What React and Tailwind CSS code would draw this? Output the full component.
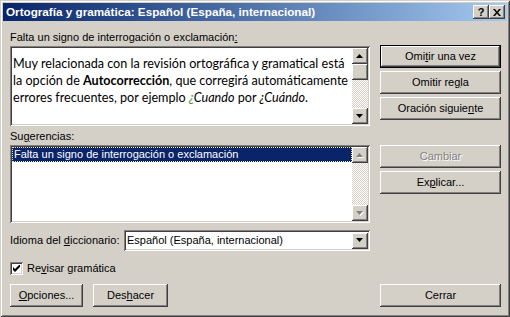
import React from "react"

const raised =
  "shadow-[inset_-1px_-1px_#404040,inset_1px_1px_#ffffff,inset_-2px_-2px_#808080,inset_2px_2px_#d4d0c8]"
const sunken =
  "shadow-[inset_1px_1px_#808080,inset_-1px_-1px_#ffffff,inset_2px_2px_#404040,inset_-2px_-2px_#d4d0c8]"
const checker =
  "bg-[image:repeating-conic-gradient(#d4d0c8_0_25%,#ffffff_0_50%)] bg-[length:2px_2px]"

function Button({ children, className = "", disabled, isDefault }) {
  if (isDefault) {
    return (
      <div className={`border border-black ${className}`}>
        <div className={`h-full flex items-center justify-center bg-[#d4d0c8] ${raised}`}>
          {children}
        </div>
      </div>
    )
  }
  return (
    <div
      className={`flex items-center justify-center bg-[#d4d0c8] ${raised} ${
        disabled ? "text-[#808080] [text-shadow:1px_1px_#ffffff]" : "text-black"
      } ${className}`}
    >
      {children}
    </div>
  )
}

function Arrow({ down, disabled }) {
  const d = down ? "M0 0h7L3.5 4z" : "M3.5 0L7 4H0z"
  return (
    <svg width="8" height="5" viewBox="0 0 8 5">
      {disabled && <path d={d} fill="#ffffff" transform="translate(1 1)" />}
      <path d={d} fill={disabled ? "#808080" : "#000000"} />
    </svg>
  )
}

function ScrollButton({ down, disabled }) {
  return (
    <div className={`w-[16px] h-[16px] shrink-0 flex items-center justify-center bg-[#d4d0c8] ${raised}`}>
      <Arrow down={down} disabled={disabled} />
    </div>
  )
}

export default function App() {
  return (
    <div
      className={`w-[510px] h-[317px] bg-[#d4d0c8] p-[3px] flex flex-col text-[11px] text-black font-['Liberation_Sans',Arial,sans-serif] shadow-[inset_1px_1px_#d4d0c8,inset_-1px_-1px_#404040,inset_2px_2px_#ffffff,inset_-2px_-2px_#808080]`}
    >
      {/* title bar */}
      <div className="h-[18px] shrink-0 flex items-center bg-linear-to-r from-[#0a246a] to-[#a6caf0] pl-[3px] pr-[2px]">
        <span className="text-white font-bold text-[11.7px] whitespace-nowrap">
          Ortografía y gramática: Español (España, internacional)
        </span>
        <div className="ml-auto flex">
          <div className={`w-[16px] h-[14px] flex items-center justify-center bg-[#d4d0c8] ${raised} text-[11px] font-bold leading-none`}>
            ?
          </div>
          <div className={`w-[16px] h-[14px] flex items-center justify-center bg-[#d4d0c8] ${raised}`}>
            <svg width="8" height="7" viewBox="0 0 8 7">
              <path d="M0 0h2l2 2.5L6 0h2L5 3.5 8 7H6L4 4.5 2 7H0l3-3.5z" fill="#000" />
            </svg>
          </div>
        </div>
      </div>

      <div className="flex flex-col pl-[7px] pr-[6px]">
        <div className="flex mt-[10px]">
          {/* left column */}
          <div className="w-[360px] flex flex-col">
            <div className="h-[13px] leading-[13px] whitespace-nowrap">
              Falta un signo de interrogación o exclamación<u>:</u>
            </div>
            <div className={`mt-[2px] h-[80px] bg-white p-[2px] flex ${sunken}`}>
              <div className="flex-1 pl-[1px] pt-[7px] text-[12.6px] leading-[17px] font-['Lato',sans-serif] whitespace-nowrap">
                <div>Muy relacionada con la revisión ortográfica y gramatical está</div>
                <div>
                  la opción de <b>Autocorrección</b>, que corregirá automáticamente
                </div>
                <div>
                  errores frecuentes, por ejemplo{" "}
                  <i>
                    <span className="text-[#3f9b2f]">¿</span>Cuando
                  </i>
                  {"  "}por <i>¿Cuándo</i>.
                </div>
              </div>
              <div className="w-[16px] flex flex-col">
                <ScrollButton />
                <div className={`w-[16px] h-[16px] bg-[#d4d0c8] ${raised}`} />
                <div className={`flex-1 ${checker}`} />
                <ScrollButton down />
              </div>
            </div>

            <div className="mt-[4px] h-[13px] leading-[13px]">
              Su<u>g</u>erencias:
            </div>
            <div className={`mt-[2px] h-[78px] bg-white p-[2px] flex ${sunken}`}>
              <div className="flex-1">
                <div className="h-[15px] bg-[#0a246a] text-white border border-dotted border-[#f3e7a8] leading-[13px] pl-[1px] whitespace-nowrap">
                  Falta un signo de interrogación o exclamación
                </div>
              </div>
              <div className={`w-[16px] flex flex-col ${checker}`}>
                <ScrollButton disabled />
                <div className="flex-1" />
                <ScrollButton down disabled />
              </div>
            </div>

            <div className="mt-[7px] h-[21px] flex items-center">
              <div className="w-[114px] whitespace-nowrap">
                Idioma del <u>d</u>iccionario:
              </div>
              <div className={`w-[246px] h-[21px] bg-white p-[2px] flex items-center ${sunken}`}>
                <div className="flex-1 pl-[1px] whitespace-nowrap">Español (España, internacional)</div>
                <ScrollButton down />
              </div>
            </div>
          </div>

          {/* right column */}
          <div className="w-[121px] ml-[10px] flex flex-col">
            <Button isDefault className="mt-[14px] h-[23px]">
              Omi<u>t</u>ir una vez
            </Button>
            <Button className="mt-[3px] h-[23px]">
              Omitir re<u>g</u>la
            </Button>
            <Button className="mt-[3px] h-[23px]">
              Oración siguie<u>n</u>te
            </Button>
            <Button disabled className="mt-[25px] h-[23px]">
              Cambiar
            </Button>
            <Button className="mt-[3px] h-[23px]">
              Ex<u>p</u>licar...
            </Button>
          </div>
        </div>

        {/* checkbox */}
        <div className="mt-[11px] h-[13px] flex items-center">
          <div className={`w-[13px] h-[13px] bg-white flex items-center justify-center ${sunken}`}>
            <svg width="7" height="7" viewBox="0 0 7 7">
              <path d="M0 2v3l2 2 5-5V-1L2 4z" fill="#000" />
            </svg>
          </div>
          <span className="ml-[4px] whitespace-nowrap">
            Re<u>v</u>isar gramática
          </span>
        </div>

        {/* bottom buttons */}
        <div className="mt-[9px] flex">
          <Button className="w-[73px] h-[23px]">
            <u>O</u>pciones...
          </Button>
          <Button className="ml-[10px] w-[75px] h-[23px]">
            Des<u>h</u>acer
          </Button>
          <Button className="ml-auto w-[121px] h-[23px]">Cerrar</Button>
        </div>
      </div>
    </div>
  )
}
